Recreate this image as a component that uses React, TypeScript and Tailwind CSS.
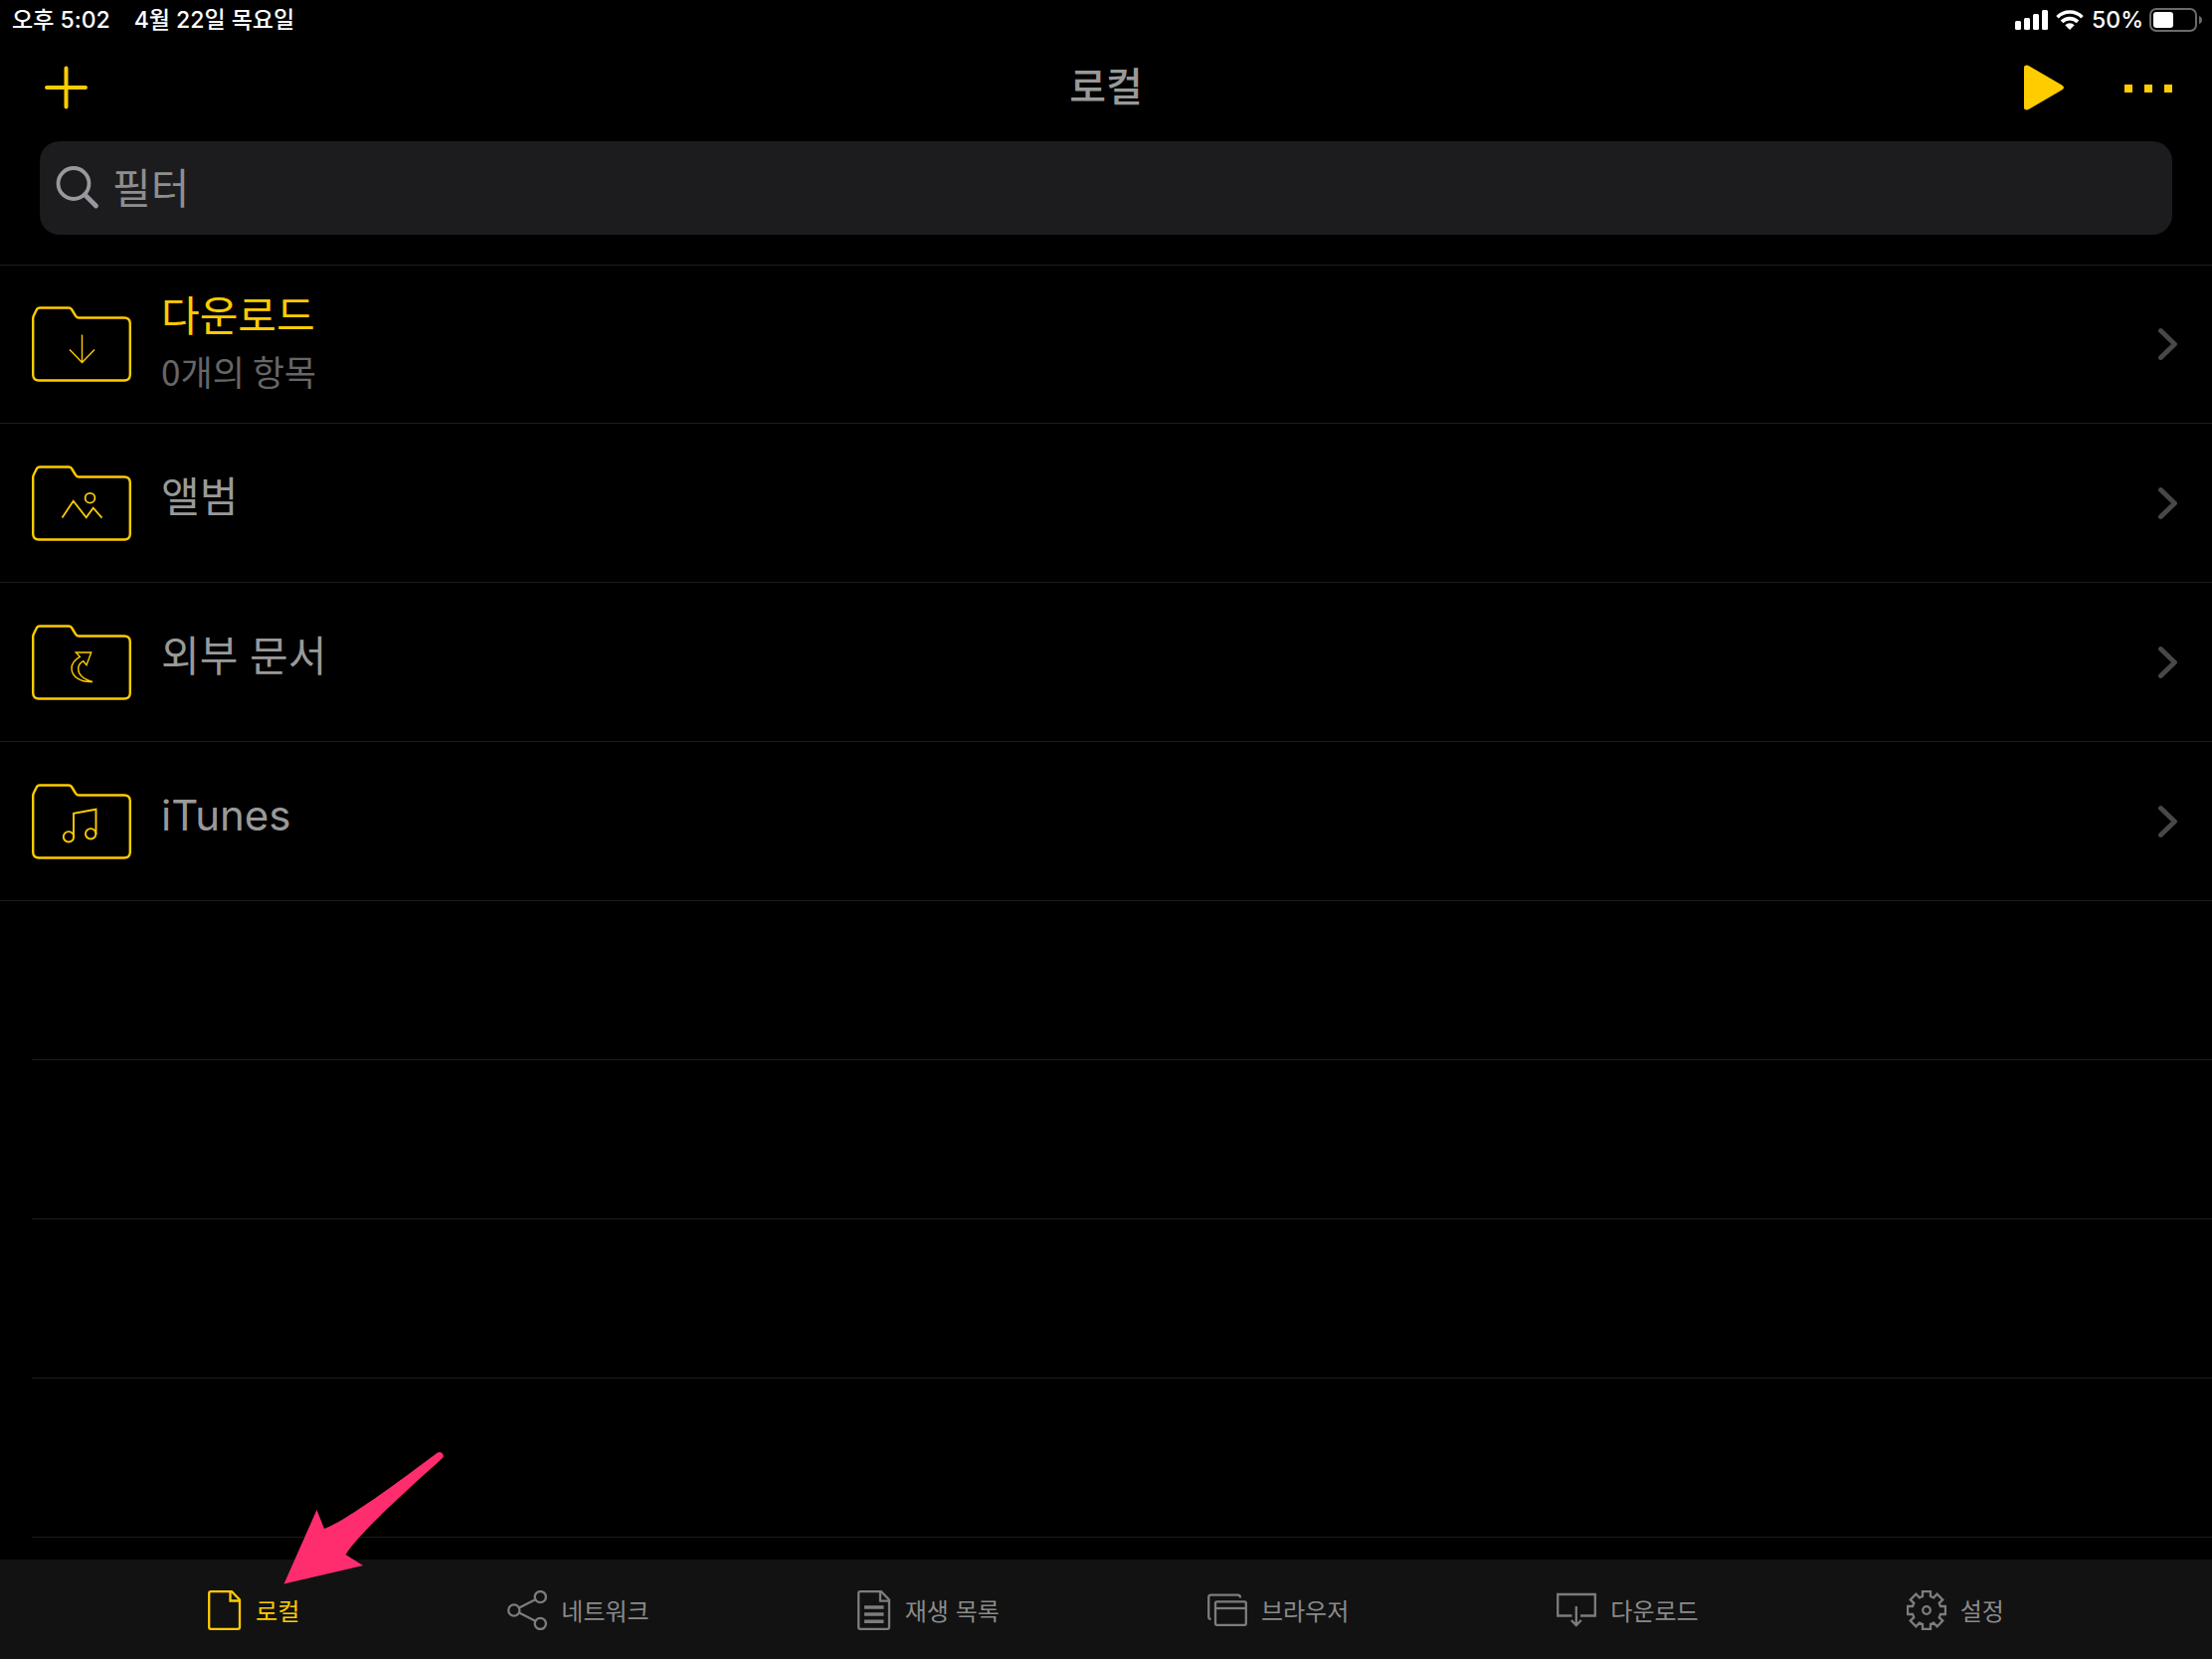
// App.tsx
import type { ReactNode } from "react";

type Row = {
  title: string;
  detail?: string;
  active?: boolean;
  glyph: ReactNode;
};

type Tab = {
  label: string;
  active?: boolean;
  width?: number;
  icon: ReactNode;
};

const rows: Row[] = [
  {
    title: "다운로드",
    detail: "0개의 항목",
    active: true,
    glyph: <path d="M50.5 27.5V55.5M38 42.5L50.5 55.5L63 42.5" strokeWidth="1.4" />,
  },
  {
    title: "앨범",
    glyph: (
      <>
        <path d="M30.5 51.5L41.7 34.7L54.7 51.3L61.7 41.7L70.5 51.7" strokeWidth="1.8" />
        <circle cx="58.5" cy="31.7" r="4.9" strokeWidth="1.8" />
      </>
    ),
  },
  {
    title: "외부 문서",
    glyph: (
      <path
        d="M44.3 27H59.7L55 39.7L51.7 35.7C48.5 37.5 46.7 40 46.7 43.3C46.7 49 52 54 61 56.5C49 57 40 51.5 40 43C40 38.5 43.5 34 48.3 31.3Z"
        strokeWidth="1.4"
      />
    ),
  },
  {
    title: "iTunes",
    glyph: (
      <>
        <path d="M42 53V28.7L64.5 24.7V50" strokeWidth="1.9" />
        <circle cx="37" cy="52.3" r="5.2" strokeWidth="1.9" />
        <circle cx="59.2" cy="49.3" r="5.2" strokeWidth="1.9" />
      </>
    ),
  },
];

const emptyRows = [0, 1, 2, 3];

const tabs: Tab[] = [
  {
    label: "로컬",
    active: true,
    width: 34,
    icon: (
      <>
        <path d="M24 1.2H3Q1.2 1.2 1.2 3V37Q1.2 38.8 3 38.8H30Q32 38.8 32 37V9.5Z" />
        <path d="M22.5 1V10.5H32" />
      </>
    ),
  },
  {
    label: "네트워크",
    icon: (
      <>
        <circle cx="6.8" cy="20" r="5.6" />
        <circle cx="33.3" cy="6.6" r="5.6" />
        <circle cx="33.3" cy="33.4" r="5.6" />
        <path d="M12 17.5L28.2 9.3M12 22.5L28.2 30.7" />
      </>
    ),
  },
  {
    label: "재생 목록",
    width: 34,
    icon: (
      <>
        <path d="M24 1.2H3Q1.2 1.2 1.2 3V37Q1.2 38.8 3 38.8H30Q32 38.8 32 37V9.5Z" />
        <path d="M23 1V10.7H32" />
        <path d="M7 17H26.5M7 24H26.5M7 31.3H26.5" strokeWidth="3.4" />
      </>
    ),
  },
  {
    label: "브라우저",
    icon: (
      <>
        <rect x="8" y="11.3" width="30.8" height="23.5" rx="1.5" />
        <path d="M8 18H39" />
        <path d="M3.5 28.7Q1.2 29 1.2 26.5V7Q1.2 4.7 3.5 4.7H30.5Q33 4.7 33 7.5" />
      </>
    ),
  },
  {
    label: "다운로드",
    icon: (
      <>
        <path d="M15.5 25.5H1.2V4H38.8V25.5H24" />
        <path d="M19.8 16V34.5M14.8 30L19.8 35L24.8 30" />
      </>
    ),
  },
  {
    label: "설정",
    icon: (
      <g transform="translate(20 20)">
        <path d="M-4-14V-19H4V-14L7.1-12.7L10.6-16.3L16.3-10.6L12.7-7.1L14-4H19V4H14L12.7 7.1L16.3 10.6L10.6 16.3L7.1 12.7L4 14V19H-4V14L-7.1 12.7L-10.6 16.3L-16.3 10.6L-12.7 7.1L-14 4H-19V-4H-14L-12.7-7.1L-16.3-10.6L-10.6-16.3L-7.1-12.7Z" />
        <circle r="3.8" />
      </g>
    ),
  },
];

function StatusBar() {
  return (
    <div className="flex h-10 items-center justify-between pl-3 pr-2.5 text-[23px] font-medium leading-10 text-white">
      <div className="flex gap-6">
        <span>오후 5:02</span>
        <span>4월 22일 목요일</span>
      </div>
      <div className="flex items-center gap-1.5">
        <div className="flex items-center gap-2">
          <svg width="33" height="20" viewBox="0 0 33 20" fill="currentColor" aria-hidden="true">
            <rect x="0" y="11" width="6" height="9" rx="1.5" />
            <rect x="9" y="8" width="6" height="12" rx="1.5" />
            <rect x="18" y="4" width="6" height="16" rx="1.5" />
            <rect x="27" y="0" width="6" height="20" rx="1.5" />
          </svg>
          <svg width="28" height="20" viewBox="0 0 28 20" aria-hidden="true">
            <g fill="none" stroke="currentColor" strokeWidth="3.6">
              <path d="M1.5 7.2A17.8 17.8 0 0 1 26.5 7.2" />
              <path d="M6 11.9A11.4 11.4 0 0 1 22 11.9" />
            </g>
            <path d="M14 20L9.3 15.3A6.7 6.7 0 0 1 18.7 15.3Z" fill="currentColor" />
          </svg>
          <span>50%</span>
        </div>
        <svg width="53" height="24" viewBox="0 0 53 24" aria-hidden="true">
          <rect x="1" y="1" width="46" height="22" rx="6" fill="none" stroke="#6b6b6b" strokeWidth="2" />
          <rect x="4" y="4" width="20" height="16" rx="3" fill="currentColor" />
          <path d="M50 8Q53 9 53 12Q53 15 50 16Z" fill="#6b6b6b" />
        </svg>
      </div>
    </div>
  );
}

function NavBar() {
  return (
    <header className="grid h-[94px] grid-cols-3 items-center px-10 pt-0.5 text-[#ffcc00]">
      <button type="button" aria-label="추가" className="w-fit px-1">
        <svg width="44" height="44" viewBox="0 0 44 44" stroke="currentColor" strokeWidth="4" strokeLinecap="round">
          <path d="M22.5 2.5V41.5M3 22H42" />
        </svg>
      </button>
      <h1 className="text-center text-[40px] font-medium leading-[56px] text-[#999999]">로컬</h1>
      <div className="flex items-center justify-end gap-[61px]">
        <button type="button" aria-label="재생">
          <svg width="40" height="46" viewBox="0 0 40 46" fill="currentColor">
            <path d="M0 3Q0 0.5 2.5 0.5Q4 0.5 5 1.2L38 20.5Q40 21.8 40 23Q40 24.2 38 25.5L5 44.8Q4 45.5 2.5 45.5Q0 45.5 0 43Z" />
          </svg>
        </button>
        <button type="button" aria-label="더 보기">
          <svg width="48" height="46" viewBox="0 0 48 46" fill="currentColor">
            <path d="M0 20H8V28H0ZM20 20H28V28H20ZM40 20H48V28H40Z" />
          </svg>
        </button>
      </div>
    </header>
  );
}

function SearchField() {
  return (
    <div className="px-10 pb-[30px] pt-2">
      <label className="flex h-[94px] items-center gap-[13px] rounded-[20px] bg-[#1c1c1e] px-4">
        <svg width="44" height="44" viewBox="0 0 44 44" fill="none" stroke="#98989f" aria-hidden="true">
          <circle cx="18" cy="17.5" r="15.5" strokeWidth="3.8" />
          <path d="M29.5 29L40.5 40" strokeWidth="4.8" strokeLinecap="round" />
        </svg>
        <input
          type="search"
          aria-label="필터"
          placeholder="필터"
          className="min-w-0 flex-1 bg-transparent pt-0.5 text-[42px] leading-[64px] text-white outline-none placeholder:text-[#8e8e8e]"
        />
      </label>
    </div>
  );
}

function FolderIcon({ children }: { children: ReactNode }) {
  return (
    <svg
      width="100"
      height="76"
      viewBox="0 0 100 76"
      fill="none"
      stroke="#ffcc00"
      className="shrink-0"
      aria-hidden="true"
    >
      <path
        d="M1.2 12V69Q1.5 74.5 7 74.5H93Q98.5 74.5 98.8 69V17Q98.5 11.5 93 11.5H47Q45 11.5 44 9.5L40 3Q39 1.5 37 1.5H8Q6 1.5 5 3L2 9Q1.2 10.5 1.2 12Z"
        strokeWidth="2.4"
      />
      <g transform="translate(0 1)">{children}</g>
    </svg>
  );
}

function FolderRow({ row }: { row: Row }) {
  return (
    <li className="h-40 border-b border-[#1c1c1e] first:border-t">
      <button type="button" className="flex h-full w-full items-center pl-8 pr-[34px] text-left">
        <FolderIcon>{row.glyph}</FolderIcon>
        <span className={`flex flex-1 flex-col pl-[30px] ${row.detail ? "pb-1.5" : "pb-3"}`}>
          <span className={`text-[42px] leading-[60px] ${row.active ? "text-[#ffcc00]" : "text-[#999999]"}`}>
            {row.title}
          </span>
          {row.detail && (
            <span className="font-['Noto_Sans_CJK_KR',sans-serif] text-[35px] leading-[50px] text-[#666666]">
              {row.detail}
            </span>
          )}
        </span>
        <svg width="20" height="34" viewBox="0 0 20 34" fill="none" stroke="#48484a" aria-hidden="true">
          <path d="M2.5 3.5L16.5 17L2.5 30.5" strokeWidth="4.8" strokeLinecap="round" strokeLinejoin="round" />
        </svg>
      </button>
    </li>
  );
}

// Flecha que señala la pestaña activa
function Pointer() {
  return (
    <svg
      width="162"
      height="134"
      viewBox="0 0 162 134"
      fill="#ff2d6e"
      className="pointer-events-none absolute bottom-[46px] left-[76px]"
      aria-hidden="true"
    >
      <path d="M0.5 133.5L33.5 59L41 78C62 70 102 41 155 1.5C158 -0.5 162 3 160.5 6.5C146 20 78 79 62.5 104L80 115Z" />
    </svg>
  );
}

function TabBar() {
  return (
    <nav className="flex h-[100px] shrink-0 items-center justify-between bg-[#121212] px-[9.4%] pt-0.5">
      {tabs.map((tab) => (
        <div key={tab.label} className="relative">
          <button
            type="button"
            className={`flex h-10 items-center gap-3.5 text-[24px] leading-10 ${
              tab.active ? "text-[#ffcc00]" : "text-[#8a8a8a]"
            }`}
          >
            <svg
              width={tab.width ?? 40}
              height="40"
              viewBox={`0 0 ${tab.width ?? 40} 40`}
              fill="none"
              stroke={tab.active ? "#ffcc00" : "#7d7d7d"}
              strokeWidth="2.3"
              aria-hidden="true"
            >
              {tab.icon}
            </svg>
            <span className="pt-1">{tab.label}</span>
          </button>
          {tab.active && <Pointer />}
        </div>
      ))}
    </nav>
  );
}

export default function App() {
  return (
    <div className="flex h-screen flex-col bg-black font-[Inter,'Noto_Sans_CJK_KR',sans-serif]">
      <StatusBar />
      <NavBar />
      <SearchField />
      <main className="min-h-0 flex-1 overflow-hidden">
        <ul>
          {rows.map((row) => (
            <FolderRow key={row.title} row={row} />
          ))}
        </ul>
        <div className="pl-8" aria-hidden="true">
          {emptyRows.map((n) => (
            <div key={n} className="h-40 border-b border-[#1c1c1e]" />
          ))}
        </div>
      </main>
      <TabBar />
    </div>
  );
}
